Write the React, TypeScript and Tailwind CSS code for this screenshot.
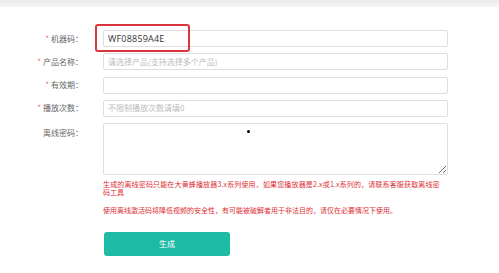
import React from 'react';

const cjk = '"Noto Sans CJK SC", "Noto Sans", sans-serif';

const FormRow: React.FC<{ label: string; required?: boolean; children: React.ReactNode }> = ({ label, required, children }) => (
    <div className="flex items-center h-[17px]">
        <div className="w-[83px] text-right text-[8px] text-[#666] leading-none">
            {required && <span className="text-[#e07070] mr-[2px]">*</span>}
            {label}：
        </div>
        <div className="ml-[20px] w-[345px] h-full">{children}</div>
    </div>
);

const Field: React.FC<{ value?: string; placeholder?: string }> = ({ value, placeholder }) => (
    <div className="w-full h-full border border-[#dedede] rounded-[2px] bg-white flex items-center pl-[4px]">
        {value ? (
            <span className="text-[9px] text-[#333] font-medium tracking-[0.2px]" style={{ fontFamily: '"Open Sans", "Noto Sans CJK SC", sans-serif' }}>{value}</span>
        ) : (
            <span className="text-[8px] text-[#bdbdbd]">{placeholder}</span>
        )}
    </div>
);

export default function App() {
    return (
        <div className="relative w-[499px] h-[273px] bg-white overflow-hidden" style={{ fontFamily: cjk }}>
            <div className="h-[7px] bg-gradient-to-b from-[#ececec] to-[#f5f5f5]" />

            <div className="pt-[23px] flex flex-col gap-[6.25px]">
                <FormRow label="机器码" required>
                    <Field value="WF08859A4E" />
                </FormRow>
                <FormRow label="产品名称" required>
                    <Field placeholder="请选择产品(支持选择多个产品)" />
                </FormRow>
                <FormRow label="有效期" required>
                    <Field />
                </FormRow>
                <FormRow label="播放次数" required>
                    <Field placeholder="不限制播放次数请填0" />
                </FormRow>

                <div className="flex items-start">
                    <div className="w-[83px] text-right text-[8px] text-[#666] leading-none pt-[6px]">离线密码：</div>
                    <textarea
                        className="ml-[20px] w-[345px] h-[52px] border border-[#dedede] rounded-[2px] bg-white outline-none resize"
                        defaultValue=""
                    />
                </div>
            </div>

            <div className="ml-[103px] mt-[6px] w-[350px] text-[7px] text-[#dd2f36]">
                <p className="leading-[7.5px] whitespace-nowrap tracking-[0.15px]">
                    生成的离线密码只能在大黄蜂播放器3.x系列使用，如果您播放器是2.x或1.x系列的，请联系客服获取离线密
                </p>
                <p className="leading-[7.5px]">码工具</p>
                <p className="leading-[7.5px] mt-[11px] whitespace-nowrap">
                    使用离线激活码将降低视频的安全性，有可能被破解者用于非法目的，请仅在必要情况下使用。
                </p>
            </div>

            <button className="ml-[104px] mt-[17px] w-[126px] h-[24px] rounded-[3px] bg-[#1dbba5] text-white text-[8px] flex items-center justify-center">
                生成
            </button>

            {/* annotation overlay */}
            <div className="absolute left-[95px] top-[24px] w-[95px] h-[28px] border-2 border-[#d9363e] rounded-[3px]" />
            <div className="absolute left-[247px] top-[130px] w-[3px] h-[3px] rounded-full bg-black" />
        </div>
    );
}
